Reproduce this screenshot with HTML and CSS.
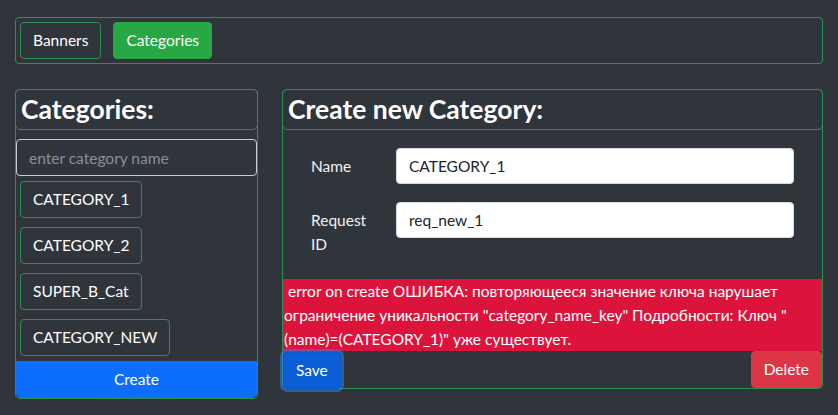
FILE: index.html
```html
<!DOCTYPE html>
<html lang="en">
<head>
<meta charset="utf-8">
<title>Categories</title>
<link rel="stylesheet" href="styles.css">
</head>
<body>
<div class="page">
  <nav class="topbar">
    <button class="btn btn-outline">Banners</button>
    <button class="btn btn-green">Categories</button>
  </nav>
  <div class="columns">
    <section class="panel left">
      <h2 class="panel-title">Categories:</h2>
      <input class="search" type="text" placeholder="enter category name">
      <div class="cat-list">
        <button class="btn btn-outline cat">CATEGORY_1</button>
        <button class="btn btn-outline cat">CATEGORY_2</button>
        <button class="btn btn-outline cat">SUPER_B_Cat</button>
        <button class="btn btn-outline cat">CATEGORY_NEW</button>
      </div>
      <button class="btn btn-create">Create</button>
    </section>
    <section class="panel right">
      <h2 class="panel-title">Create new Category:</h2>
      <form class="form">
        <div class="form-row">
          <label class="form-label">Name</label>
          <input class="form-input" type="text" value="CATEGORY_1">
        </div>
        <div class="form-row">
          <label class="form-label">Request ID</label>
          <input class="form-input" type="text" value="req_new_1">
        </div>
      </form>
      <div class="error">&nbsp;error on create ОШИБКА: повторяющееся значение ключа нарушает ограничение уникальности "category_name_key" Подробности: Ключ "(name)=(CATEGORY_1)" уже существует.</div>
      <div class="actions">
        <button class="btn btn-save">Save</button>
        <button class="btn btn-delete">Delete</button>
      </div>
    </section>
  </div>
</div>
</body>
</html>
```

FILE: styles.css
```css
* { box-sizing: border-box; }
html, body { margin: 0; padding: 0; }
body {
  background: #30353c;
  color: #fff;
  font-family: Lato, "Liberation Sans", sans-serif;
  font-size: 15.5px;
  width: 838px;
  height: 415px;
  overflow: hidden;
}
.page { padding: 17px 15px 0 15px; }

.btn {
  font-family: inherit;
  font-size: 15.5px;
  line-height: 23px;
  height: 37px;
  padding: 6px 12px;
  border: 1px solid transparent;
  border-radius: 4px;
  color: #fff;
  background: transparent;
  cursor: pointer;
  display: block;
  flex-shrink: 0;
}
.btn-outline { border-color: #2f8f4e; background: #30353c; }
.btn-green { background: #28a745; border-color: #28a745; }

.topbar {
  display: flex;
  gap: 12px;
  padding: 4px;
  border: 1px solid #2f8f4e;
  border-radius: 4px;
  height: 47px;
}

.columns {
  display: grid;
  grid-template-columns: 243px 1fr;
  column-gap: 24px;
  margin-top: 25px;
}

.panel {
  border: 1px solid #2f8f4e;
  border-top: none;
  border-radius: 5px;
  display: flex;
  flex-direction: column;
}
.panel-title {
  flex-shrink: 0;
  margin: 0 -1px;
  height: 41px;
  border: 1px solid #2f8f4e;
  border-radius: 5px;
  font-size: 26.5px;
  font-weight: 700;
  line-height: 38px;
  padding: 0 5px;
}
.left { height: 310px; }
.search {
  flex-shrink: 0;
  margin: 9px 0 0 0;
  height: 37px;
  background: transparent;
  border: 1px solid #c9ccd1;
  border-radius: 4px;
  padding: 6px 12px;
  font-family: inherit;
  font-size: 15.5px;
  color: #fff;
}
.search::placeholder { color: #8a8f96; }
.cat-list {
  flex-shrink: 0;
  display: flex;
  flex-direction: column;
  align-items: flex-start;
  gap: 9px;
  padding: 5px 4px 0 4px;
}
.btn-create {
  margin-top: 5px;
  width: 100%;
  background: #0d6efd;
  border-color: #0d6efd;
  border-radius: 0 0 5px 5px;
}

.right { height: 300px; }
.form { padding: 18px 28px 0 28px; display: flex; flex-direction: column; gap: 18px; }
.form-row { display: grid; grid-template-columns: 85px 1fr; align-items: start; }
.form-label { width: 70px; line-height: 24px; padding-top: 6px; color: #f2f2f2; }
.form-input {
  height: 36px;
  border: 1px solid #d6d9dc;
  border-radius: 4px;
  background: #fff;
  padding: 6px 12px;
  font-family: inherit;
  font-size: 15.5px;
  color: #212529;
}
.error {
  flex-shrink: 0;
  margin-top: 23px;
  background: #dc143c;
  color: #fff;
  line-height: 24px;
  padding: 0 1px;
}
.actions { display: flex; justify-content: space-between; align-items: flex-start; }
.btn-save {
  background: #0b5ed7;
  border-color: #0a58ca;
  box-shadow: 0 0 0 3px rgba(49, 132, 253, 0.5);
  margin-top: 1px;
}
.btn-delete { background: #dc3545; border-color: #dc3545; }
```
